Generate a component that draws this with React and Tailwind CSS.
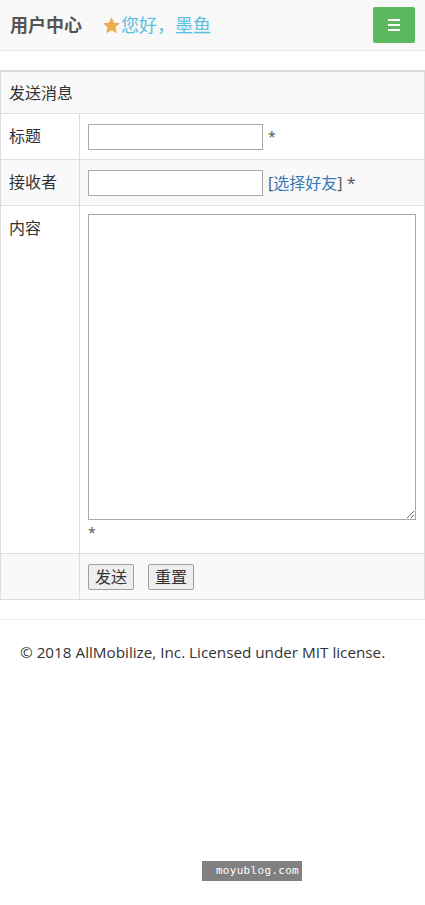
export default function App() {
  const font = { fontFamily: '"Open Sans", "Noto Sans CJK SC", sans-serif' };
  return (
    <div className="relative w-[425px] h-[905px] bg-white text-[#333] text-[16px]" style={font}>
      {/* 顶部导航 */}
      <div className="h-[51px] bg-[#f8f8f8] border-b border-[#e7e7e7] flex items-center pl-[10px] pr-[10px]">
        <span className="font-bold text-[#555] text-[18px]">用户中心</span>
        <span className="ml-[20px] flex items-center text-[#5bc0de] text-[18px]">
          <svg width="19" height="19" viewBox="0 0 24 24" className="mr-[0px]">
            <path d="M12 1.5l3.2 6.9 7.5.8-5.6 5.1 1.6 7.4L12 17.9l-6.7 3.8 1.6-7.4L1.3 9.2l7.5-.8z" fill="#f0ad4e" />
          </svg>
          您好，<span className="underline decoration-[#bfe6f2]">墨鱼</span>
        </span>
        <button className="ml-auto w-[42px] h-[36px] bg-[#5cb85c] rounded-[2px] flex items-center justify-center">
          <span className="flex flex-col gap-[3px]">
            <span className="block w-[12px] h-[2px] bg-white"></span>
            <span className="block w-[12px] h-[2px] bg-white"></span>
            <span className="block w-[12px] h-[2px] bg-white"></span>
          </span>
        </button>
      </div>

      {/* 表单表格 */}
      <div className="mt-[19px] border border-[#ddd] border-t-2 border-t-[#ddd]">
        <div className="h-[42px] bg-[#f9f9f9] flex items-center px-[8px] border-b border-[#ddd]">发送消息</div>
        <div className="flex h-[46px] border-b border-[#ddd]">
          <div className="w-[79px] border-r border-[#ddd] px-[8px] pt-[10px]">标题</div>
          <div className="flex-1 px-[8px] flex items-center">
            <input className="w-[175px] h-[26px] border border-[#a9a9a9] bg-white" />
            <span className="ml-[5px] text-[14px] text-[#555]">*</span>
          </div>
        </div>
        <div className="flex h-[46px] border-b border-[#ddd] bg-[#f9f9f9]">
          <div className="w-[79px] border-r border-[#ddd] px-[8px] pt-[10px]">接收者</div>
          <div className="flex-1 px-[8px] flex items-center">
            <input className="w-[175px] h-[26px] border border-[#a9a9a9] bg-white" />
            <span className="ml-[5px] text-[#555]">
              [<a className="text-[#337ab7]">选择好友</a>] *
            </span>
          </div>
        </div>
        <div className="flex h-[348px] border-b border-[#ddd]">
          <div className="w-[79px] border-r border-[#ddd] px-[8px] pt-[10px]">内容</div>
          <div className="flex-1 px-[8px] pt-[8px]">
            <textarea className="block w-[328px] h-[306px] border border-[#a9a9a9] bg-white"></textarea>
            <div className="text-[14px] text-[#555] mt-[2px] h-[20px]">*</div>
          </div>
        </div>
        <div className="flex h-[45px] bg-[#f9f9f9]">
          <div className="w-[79px] border-r border-[#ddd]"></div>
          <div className="flex-1 px-[8px] flex items-center gap-[14px]">
            <button className="h-[26px] px-[6px] border border-[#a0a0a0] bg-[#eeeeee] rounded-[2px] text-[16px] leading-none">发送</button>
            <button className="h-[26px] px-[6px] border border-[#a0a0a0] bg-[#eeeeee] rounded-[2px] text-[16px] leading-none">重置</button>
          </div>
        </div>
      </div>

      {/* 页脚 */}
      <div className="mt-[19px] border-t border-[#eee] pt-[21px] px-[20px]">
        <p className="text-[15.25px] text-[#333]">© 2018 AllMobilize, Inc. Licensed under MIT license.</p>
      </div>

      <div className="absolute left-[202px] top-[861px] w-[100px] h-[20px] bg-[#808080] text-white text-[11px] flex items-center justify-end pr-[3px] tracking-[0.3px]" style={{ fontFamily: '"DejaVu Sans Mono", monospace' }}>
        moyublog.com
      </div>
    </div>
  );
}
